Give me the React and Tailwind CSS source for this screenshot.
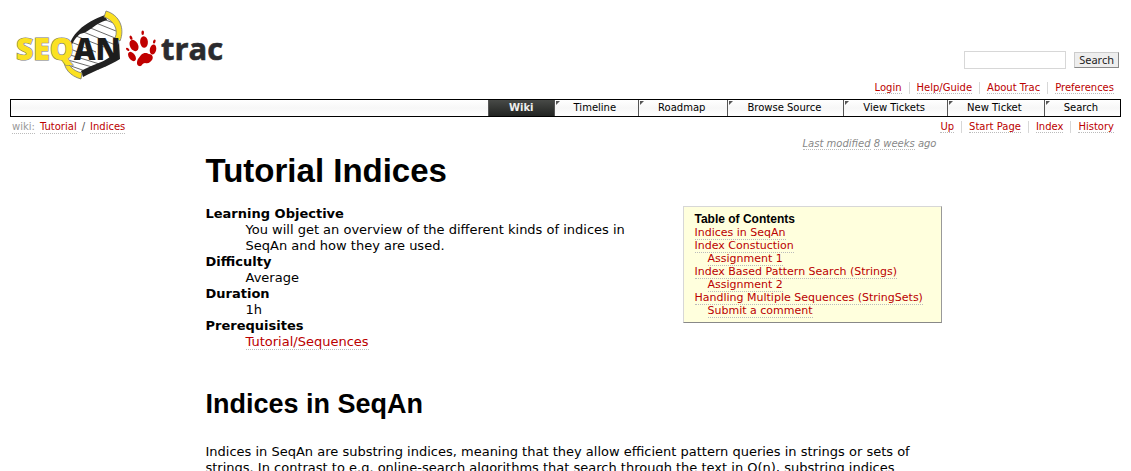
const linkClass = 'border-b border-dotted border-[#bbb] text-[#b00]';

const metaLinks = ['Login', 'Help/Guide', 'About Trac', 'Preferences'];
const contextLinks = ['Up', 'Start Page', 'Index', 'History'];
const tabs = ['Timeline', 'Roadmap', 'Browse Source', 'View Tickets', 'New Ticket', 'Search'];
const contents = [
  { label: 'Indices in SeqAn' },
  { label: 'Index Constuction' },
  { label: 'Assignment 1', nested: true },
  { label: 'Index Based Pattern Search (Strings)' },
  { label: 'Assignment 2', nested: true },
  { label: 'Handling Multiple Sequences (StringSets)' },
  { label: 'Submit a comment', nested: true },
];

function Logo() {
  return (
    <svg width="216" height="76" viewBox="10 7 216 76" role="img" aria-label="SeqAn trac">
      <path
        d="M67 59C64 46 75 31 92 22C98 19 103 17 107 15C120 23 123 38 119 57C109 66 94 66 81 75C73 72 68 68 67 59Z"
        fill="#fff"
      />
      <g stroke="#444" strokeWidth="0.8" fill="none">
        <path d="M103 19L119 25M96 23L121 33M88 27L120 40M81 31L118 46M76 36L104 47M71 42L96 52M68 48L90 57M67 54L106 66M68 60L99 69M71 66L88 72" />
      </g>
      <path d="M69 50C69 36 84 22 105 15L107 20C95 23 90 32 80 34C75 38 72 43 70 50Z" fill="#222" />
      <path d="M81 71C91 65 102 63 110 57C115 53 118 48 119 40L120 59C109 66 96 70 83 77Z" fill="#222" />
      <path d="M106 11C120 15 125 29 120 41L115 38C119 29 113 20 104 17Z" fill="#fbe122" stroke="#777" strokeWidth="0.8" />
      <path d="M66 56C67 65 73 71 82 73L81 79C70 76 63 68 64 58Z" fill="#fbe122" stroke="#777" strokeWidth="0.8" />
      <text x="16" y="60" fontFamily="'Open Sans', sans-serif" fontSize="30" fontWeight="800">
        <tspan fill="#fbe122" stroke="#777" strokeWidth="1.2" paintOrder="stroke">SEQ</tspan>
        <tspan fill="#1c1c1c">AN</tspan>
      </text>
      <g fill="#c00000">
        <ellipse cx="144" cy="42" rx="3.900" ry="5.800" transform="rotate(-4 144 42)" />
        <ellipse cx="134" cy="45.500" rx="4" ry="6" transform="rotate(-28 134 45.500)" />
        <ellipse cx="153" cy="49.500" rx="3.200" ry="5" transform="rotate(12 153 49.500)" />
        <ellipse cx="132" cy="56.500" rx="3.200" ry="5.200" transform="rotate(-35 132 56.500)" />
        <path d="M141 55C144 52 147 53 149 54C152 54 154 57 152 60C150 62 149 64 145 63C142 63 142 67 139 66C136 65 137 61 138 59Z" />
        <ellipse cx="142.700" cy="32.700" rx="1.300" ry="2.200" />
        <ellipse cx="131" cy="37.700" rx="1.300" ry="2.200" transform="rotate(-25 131 37.700)" />
        <ellipse cx="154.300" cy="41.500" rx="1.200" ry="2" transform="rotate(20 154.300 41.500)" />
        <ellipse cx="127.700" cy="49.400" rx="1.200" ry="2" transform="rotate(-50 127.700 49.400)" />
      </g>
      <text x="161" y="60" fontFamily="'Open Sans', sans-serif" fontSize="31" fontWeight="700" fill="#2b2b2e" stroke="#2b2b2e" strokeWidth="0.6">
        trac
      </text>
    </svg>
  );
}

function LinkBar({ items, label }) {
  return (
    <nav aria-label={label}>
      <ul className="flex justify-end divide-x divide-[#d7d7d7] text-[10px] leading-3">
        {items.map((item) => (
          <li key={item} className="px-[7px]">
            <a href="#" className={linkClass}>{item}</a>
          </li>
        ))}
      </ul>
    </nav>
  );
}

export default function App() {
  return (
    <div className="bg-white px-[10px] pt-[7px] font-['DejaVu_Sans',Verdana,sans-serif] text-[13px] leading-4 text-black">
      <header>
        <div className="flex items-start justify-between">
          <a href="#" className="-mb-2"><Logo /></a>
          <form className="mt-11 flex items-center gap-2 pr-[2px]" onSubmit={(e) => e.preventDefault()}>
            <input type="text" aria-label="Search" className="h-[18px] w-[102px] border border-[#d7d7d7] px-1 text-[10px] outline-none" />
            <button type="submit" className="h-4 border border-[#ccc] border-r-[#888] border-b-[#888] bg-[#eee] px-1 font-['Noto_Sans',sans-serif] text-[11px] leading-3 text-[#222]">
              Search
            </button>
          </form>
        </div>
        <div className="mt-[7px]"><LinkBar items={metaLinks} label="Account" /></div>
      </header>

      <nav aria-label="Main" className="mt-[5px] border border-black bg-linear-to-b from-white via-[#f7f7f7] to-white text-[10px] leading-4">
        <ul className="flex justify-end">
          <li className="border-l border-[#555] bg-linear-to-b from-[#484a47] to-[#222422] font-bold text-[#eee]">
            <a href="#" aria-current="page" className="block px-5">Wiki</a>
          </li>
          {tabs.map((tab) => (
            <li key={tab} className="flex border-l border-[#555]">
              <svg width="4" height="4" viewBox="0 0 4 4" className="mt-px ml-px" aria-hidden="true">
                <path d="M0 0H4L0 4Z" fill="#555" />
              </svg>
              <a href="#" className="block pr-[22px] pl-[14px]">{tab}</a>
            </li>
          ))}
        </ul>
      </nav>

      <div className="mt-1 flex items-start justify-between text-[10px] leading-3">
        <nav aria-label="Breadcrumb" className="flex gap-[5px] px-[2px] text-[#555]">
          <a href="#" className="border-b border-dotted border-[#bbb] text-[#999]">wiki:</a>
          <a href="#" className={linkClass}>Tutorial</a>
          <span>/</span>
          <a href="#" className={linkClass}>Indices</a>
        </nav>
        <LinkBar items={contextLinks} label="Page" />
      </div>

      <main className="mx-auto max-w-[752px] pt-1 pl-4">
        <p className="pr-[5px] text-right text-[10px] leading-3 text-[#888] italic">
          <a href="#" className="border-b border-dotted border-[#bbb]">Last modified</a>{' '}
          <a href="#" className="border-b border-dotted border-[#bbb]">8 weeks</a> ago
        </p>
        <h1 className="mt-px font-['Liberation_Sans',Arial,sans-serif] text-[33px] leading-10 font-bold">Tutorial Indices</h1>

        <div className="mt-[15px] flex items-start justify-between gap-8">
          <dl>
            <dt className="font-bold">Learning Objective</dt>
            <dd className="ml-10">You will get an overview of the different kinds of indices in SeqAn and how they are used.</dd>
            <dt className="font-bold">Difficulty</dt>
            <dd className="ml-10">Average</dd>
            <dt className="font-bold">Duration</dt>
            <dd className="ml-10">1h</dd>
            <dt className="font-bold">Prerequisites</dt>
            <dd className="ml-10"><a href="#" className={linkClass}>Tutorial/Sequences</a></dd>
          </dl>
          <nav aria-labelledby="toc" className="min-w-[259px] shrink-0 border border-[#d7d7d7] border-r-[#999] border-b-[#888] bg-[#ffffdd] px-[11px] py-[5px] text-[11px] leading-[13px]">
            <h2 id="toc" className="font-['Liberation_Sans',Arial,sans-serif] text-xs leading-[14px] font-bold">Table of Contents</h2>
            <ol>
              {contents.map(({ label, nested }) => (
                <li key={label} className={nested ? 'pl-[13px]' : ''}>
                  <a href="#" className={linkClass}>{label}</a>
                </li>
              ))}
            </ol>
          </nav>
        </div>

        <h2 className="mt-9 font-['Liberation_Sans',Arial,sans-serif] text-[27px] leading-9 font-bold">Indices in SeqAn</h2>
        <p className="mt-[22px]">
          Indices in SeqAn are substring indices, meaning that they allow efficient pattern queries in strings or sets of
          <br />
          strings. In contrast to e.g. online-search algorithms that search through the text in O(n), substring indices
        </p>
      </main>
    </div>
  );
}
